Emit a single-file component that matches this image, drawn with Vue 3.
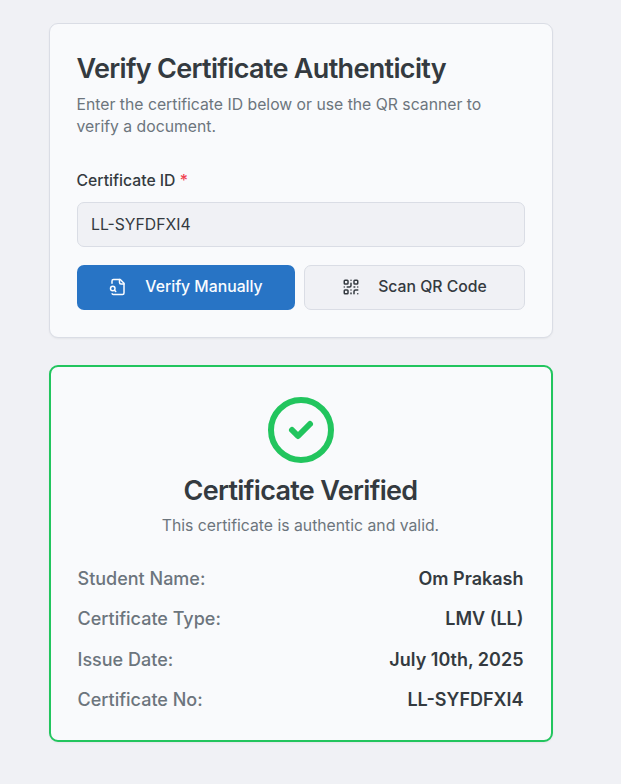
<script setup>
import { ref } from 'vue'

const certificateId = ref('LL-SYFDFXI4')
const details = [
  { label: 'Student Name:', value: 'Om Prakash' },
  { label: 'Certificate Type:', value: 'LMV (LL)' },
  { label: 'Issue Date:', value: 'July 10th, 2025' },
  { label: 'Certificate No:', value: 'LL-SYFDFXI4' },
]
</script>

<template>
  <main class="page">
    <section class="card form-card">
      <h1 class="title">Verify Certificate Authenticity</h1>
      <p class="subtitle">Enter the certificate ID below or use the QR scanner to verify a document.</p>
      <label class="label" for="certificate-id">Certificate ID <span class="required">*</span></label>
      <input id="certificate-id" v-model="certificateId" class="input" type="text" />
      <div class="actions">
        <button class="button primary" type="button">
          <svg class="icon" viewBox="0 0 24 24">
            <path d="M14 2v4a2 2 0 0 0 2 2h4" />
            <path d="M4.268 21a2 2 0 0 0 1.727 1H18a2 2 0 0 0 2-2V7l-5-5H6a2 2 0 0 0-2 2v3" />
            <path d="m9 18-1.5-1.5" />
            <circle cx="5" cy="14" r="3" />
          </svg>
          <span>Verify Manually</span>
        </button>
        <button class="button secondary" type="button">
          <svg class="icon" viewBox="0 0 24 24">
            <rect width="5" height="5" x="3" y="3" rx="1" />
            <rect width="5" height="5" x="16" y="3" rx="1" />
            <rect width="5" height="5" x="3" y="16" rx="1" />
            <path d="M21 16h-3a2 2 0 0 0-2 2v3" />
            <path d="M21 21v.01" />
            <path d="M12 7v3a2 2 0 0 1-2 2H7" />
            <path d="M3 12h.01" />
            <path d="M12 3h.01" />
            <path d="M12 16v.01" />
            <path d="M16 12h1" />
            <path d="M21 12v.01" />
            <path d="M12 21v-1" />
          </svg>
          <span>Scan QR Code</span>
        </button>
      </div>
    </section>

    <section class="card result-card">
      <svg class="status" viewBox="0 0 24 24">
        <circle cx="12" cy="12" r="10" />
        <path d="m9 12 2 2 4-4" />
      </svg>
      <h2 class="title">Certificate Verified</h2>
      <p class="message">This certificate is authentic and valid.</p>
      <dl class="details">
        <div v-for="item in details" :key="item.label" class="row">
          <dt>{{ item.label }}</dt>
          <dd>{{ item.value }}</dd>
        </div>
      </dl>
    </section>
  </main>
</template>

<style>
body {
  margin: 0;
  background: #f0f1f5;
}
</style>

<style scoped>
* {
  box-sizing: border-box;
  margin: 0;
}
.page {
  display: flex;
  flex-direction: column;
  gap: 27px;
  width: 621px;
  height: 784px;
  padding: 23px 68.5px 0 48.5px;
  background: #f0f1f5;
  color: #343a40;
  font-family: Inter, sans-serif;
  font-size: 15.75px;
}
.card {
  background: #f9fafc;
  border-radius: 9px;
  box-shadow: 0 1px 2px rgb(0 0 0 / 5%);
}
.form-card {
  height: 315px;
  padding: 27px;
  border: 1px solid #dadde5;
}
.title {
  font-size: 27px;
  line-height: 36px;
  font-weight: 600;
  letter-spacing: -0.675px;
}
.subtitle {
  margin-top: 7px;
  color: #6c757d;
  line-height: 22px;
}
.label {
  display: block;
  margin-top: 32px;
  line-height: 22px;
  font-weight: 500;
}
.required {
  color: #f04452;
}
.input {
  display: block;
  width: 448px;
  height: 45px;
  margin-top: 10px;
  padding: 0 13.5px;
  border: 1px solid #dadde5;
  border-radius: 7px;
  background: #f0f1f5;
  color: inherit;
  font: inherit;
  outline: none;
}
.actions {
  display: flex;
  gap: 9px;
  margin-top: 18px;
}
.button {
  display: flex;
  align-items: center;
  justify-content: center;
  gap: 18.5px;
  height: 45px;
  padding: 0 0 2px 0.5px;
  border: 0;
  border-radius: 7px;
  font: inherit;
  font-weight: 500;
  white-space: nowrap;
}
.primary {
  width: 218px;
  background: #2874c5;
  color: #fafcff;
}
.secondary {
  width: 221px;
  border: 1px solid #dadde5;
  background: #f0f1f5;
  color: #343a40;
}
.icon {
  width: 18px;
  height: 18px;
  fill: none;
  stroke: currentColor;
  stroke-width: 2;
  stroke-linecap: round;
  stroke-linejoin: round;
}
.result-card {
  display: flex;
  flex-direction: column;
  align-items: center;
  height: 377px;
  padding: 27px;
  border: 2px solid #22c55e;
}
.status {
  flex: none;
  width: 72px;
  height: 72px;
  fill: none;
  stroke: #22c55e;
  stroke-width: 2;
  stroke-linecap: round;
  stroke-linejoin: round;
}
.result-card .title {
  margin-top: 7px;
}
.message {
  margin-top: 6px;
  color: #6c757d;
  line-height: 22.5px;
}
.details {
  display: flex;
  flex-direction: column;
  flex: none;
  gap: 13.5px;
  width: 446px;
  margin-top: 27px;
}
.row {
  display: flex;
  justify-content: space-between;
  font-size: 18px;
  line-height: 27px;
}
dt {
  color: #6c757d;
  font-weight: 500;
}
dd {
  font-weight: 600;
}
</style>
